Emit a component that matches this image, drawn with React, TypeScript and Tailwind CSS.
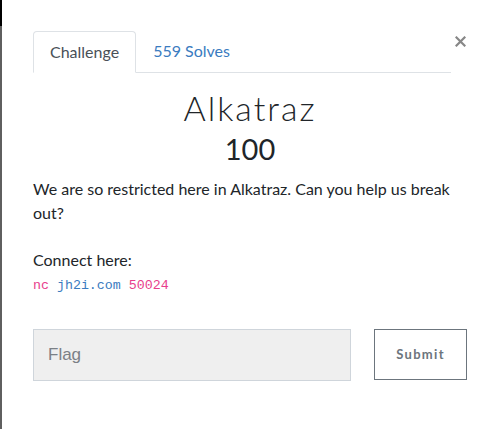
export default function App() {
  return (
    <div className="relative h-[429px] w-[498px] overflow-hidden bg-white font-['Lato',sans-serif]">
      <div className="absolute left-0 top-0 h-full w-[2px] bg-[#5f5f5f]">
        <div className="h-[26px] w-full bg-black" />
      </div>

      <div className="pl-[33px] pr-[31px] pt-[31px]">
        <div className="flex items-start">
          <ul className="flex flex-1 border-b border-[#dee2e6]">
            <li className="-mb-px rounded-t-[4px] border border-[#dee2e6] border-b-white bg-white px-[16px] py-[10px] text-[16px] leading-[20px] text-[#495057]">
              Challenge
            </li>
            <li className="px-[17px] py-[10px] text-[16px] leading-[20px] text-[#3a7bc0]">559 Solves</li>
          </ul>
          <button className="ml-[2px] mt-[4px] flex h-[13px] w-[14px] items-center justify-center">
            <svg width="11" height="11" viewBox="0 0 11 11" stroke="#878787" strokeWidth="2.2" strokeLinecap="square">
              <path d="M1.5 1.5 9.5 9.5M9.5 1.5 1.5 9.5" />
            </svg>
          </button>
        </div>

        <h2 className="mt-[15px] text-center text-[34px] font-light leading-[40px] tracking-[2px] text-[#212529]">Alkatraz</h2>
        <h3 className="mt-[4px] text-center text-[29px] leading-[34px] text-[#212529]">100</h3>

        <p className="mt-[11px] text-[16px] leading-[24px] text-[#212529]">
          We are so restricted here in Alkatraz. Can you help us break out?
        </p>
        <p className="mt-[23px] text-[16px] leading-[24px] text-[#212529]">Connect here:</p>
        <p className="mt-[2px] font-['Liberation_Mono',monospace] text-[13.3px] leading-[24px]">
          <span className="text-[#e83e8c]">nc </span>
          <span className="text-[#3a7bc0]">jh2i.com</span>
          <span className="text-[#e83e8c]"> 50024</span>
        </p>

        <div className="mt-[31px] flex items-start">
          <input
            placeholder="Flag"
            className="h-[52px] w-[318px] border border-[#cfd5db] bg-[#efefef] px-[14px] font-['Liberation_Sans',sans-serif] text-[17px] text-[#495057] placeholder:text-[#7b8086]"
          />
          <button className="ml-[23px] h-[51px] w-[93px] border border-[#6c757d] text-[13px] font-bold tracking-[1.3px] text-[#6c757d]">
            Submit
          </button>
        </div>
      </div>
    </div>
  )
}
